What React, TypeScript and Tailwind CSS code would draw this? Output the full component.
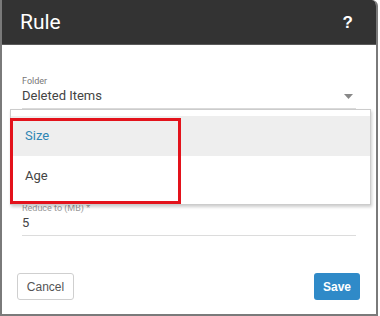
import React from 'react';

const App: React.FC = () => {
  return (
    <div className="w-[380px] h-[316px] bg-white overflow-hidden" style={{ fontFamily: 'Roboto, "Liberation Sans", sans-serif' }}>
      <div className="relative w-[378px] h-[316px] flex flex-col border-x-2 border-b-2 border-[#7a7a7a] rounded-tr-[6px] overflow-hidden">
        {/* header */}
        <div className="h-[45px] shrink-0 bg-[#333333] border-b border-[#5a5a5a] flex items-center justify-between pl-[18px] pr-[23px]">
          <span className="text-white text-[21px] leading-none pt-[1px]">Rule</span>
          <span className="text-white text-[17px] font-bold leading-none" style={{ fontFamily: '"Liberation Sans", sans-serif' }}>?</span>
        </div>

        {/* body */}
        <div className="flex-1 flex flex-col px-[20px] pt-[31px]">
          <div className="flex flex-col border-b border-[#dcdcdc] pb-[3px]">
            <span className="text-[9px] text-[#777] leading-[11px]">Folder</span>
            <div className="flex items-center justify-between">
              <span className="text-[13px] text-[#444] leading-[18px]">Deleted Items</span>
              <svg width="9" height="5" viewBox="0 0 9 5" className="mr-[3px]">
                <path d="M0 0h9L4.5 5z" fill="#888" />
              </svg>
            </div>
          </div>

          <div className="flex flex-col border-b border-[#dcdcdc] pb-[3px] mt-[94px]">
            <span className="text-[9px] text-[#999] leading-[11px]">Reduce to (MB) *</span>
            <span className="text-[13px] text-[#444] leading-[18px]">5</span>
          </div>

          <div className="flex items-center justify-between mt-[37px]" style={{ fontFamily: '"Liberation Sans", Arial, sans-serif' }}>
            <button className="-ml-[5px] w-[57px] h-[27px] border border-[#cfcfcf] rounded-[3px] text-[12px] text-[#555] bg-white">Cancel</button>
            <button className="-mr-[4px] w-[46px] h-[27px] rounded-[3px] bg-[#2f8ac8] text-[12px] font-bold text-white">Save</button>
          </div>
        </div>

        {/* dropdown menu overlay */}
        <div className="absolute left-[8px] top-[109px] w-[361px] h-[96px] bg-white border border-[#cccccc] shadow-[1px_2px_3px_rgba(0,0,0,0.2)] pt-[6px]">
          <div className="h-[40px] bg-[#eeeeee] flex items-center pl-[14px] text-[13px] text-[#2f86b4]">Size</div>
          <div className="h-[40px] flex items-center pl-[14px] text-[13px] text-[#444]">Age</div>
        </div>

        {/* annotation box */}
        <div className="absolute left-[8px] top-[118px] w-[171px] h-[86px] border-[3px] border-[#e3121b]" />
      </div>
    </div>
  );
};

export default App;
